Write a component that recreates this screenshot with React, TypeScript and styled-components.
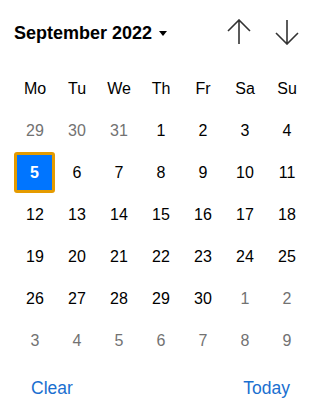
import styled, { createGlobalStyle } from 'styled-components';

const GlobalStyle = createGlobalStyle`
  html, body {
    margin: 0;
    padding: 0;
    background: #ffffff;
  }
  body {
    font-family: 'Liberation Sans', Arial, sans-serif;
  }
`;

type Day = { n: number; muted?: boolean; selected?: boolean };

const weekdays = ['Mo', 'Tu', 'We', 'Th', 'Fr', 'Sa', 'Su'];

const buildDays = (): Day[] => {
  const days: Day[] = [29, 30, 31].map(n => ({ n, muted: true }));
  for (let n = 1; n <= 30; n++) days.push({ n, selected: n === 5 });
  for (let n = 1; n <= 9; n++) days.push({ n, muted: true });
  return days;
};

const App = () => {
  const days = buildDays();

  return (
    <>
      <GlobalStyle />
      <Picker>
        <Header>
          <MonthButton>
            September 2022
            <Caret />
          </MonthButton>
          <Arrows>
            <ArrowButton aria-label='Previous month'>
              <svg width='24' height='26' viewBox='0 0 24 26'>
                <path d='M1 12 L12 1 L23 12 M12 1 V25' fill='none' stroke='#333' strokeWidth='1.6' />
              </svg>
            </ArrowButton>
            <ArrowButton aria-label='Next month'>
              <svg width='24' height='26' viewBox='0 0 24 26'>
                <path d='M1 14 L12 25 L23 14 M12 25 V1' fill='none' stroke='#333' strokeWidth='1.6' />
              </svg>
            </ArrowButton>
          </Arrows>
        </Header>
        <Grid>
          {weekdays.map(w => (
            <Cell key={w}>{w}</Cell>
          ))}
          {days.map((d, i) => (
            <Cell key={i} $muted={d.muted}>
              {d.selected ? <Selected>{d.n}</Selected> : d.n}
            </Cell>
          ))}
        </Grid>
        <Footer>
          <LinkButton>Clear</LinkButton>
          <LinkButton>Today</LinkButton>
        </Footer>
      </Picker>
    </>
  );
};
export default App;

const Picker = styled.div`
  width: 319px;
  height: 415px;
  box-sizing: border-box;
  padding: 0 12px 0 14px;
  background: #fff;
`;

const Header = styled.div`
  display: flex;
  align-items: center;
  justify-content: space-between;
  height: 68px;
  padding-bottom: 2px;
  box-sizing: border-box;
`;

const MonthButton = styled.div`
  display: flex;
  align-items: center;
  font-size: 18px;
  font-weight: 700;
  color: #000;
`;

const Caret = styled.span`
  width: 0;
  height: 0;
  margin-left: 7px;
  margin-top: 1px;
  border-left: 4px solid transparent;
  border-right: 4px solid transparent;
  border-top: 5px solid #000;
`;

const Arrows = styled.div`
  display: flex;
  gap: 12px;
  margin-right: 2px;
  margin-top: -2px;
`;

const ArrowButton = styled.div`
  width: 36px;
  height: 30px;
  display: flex;
  align-items: center;
  justify-content: center;
`;

const Grid = styled.div`
  display: grid;
  grid-template-columns: repeat(7, 42px);
  grid-auto-rows: 42px;
`;

const Cell = styled.div<{ $muted?: boolean }>`
  display: flex;
  align-items: center;
  justify-content: center;
  font-size: 16px;
  color: ${p => (p.$muted ? '#727272' : '#000')};
`;

const Selected = styled.div`
  width: 41px;
  height: 41px;
  margin: -1px 1px 0 0;
  box-sizing: border-box;
  border: 3px solid #e59b00;
  border-radius: 3px;
  background: #0075ff;
  color: #fff;
  font-weight: 700;
  display: flex;
  align-items: center;
  justify-content: center;
`;

const Footer = styled.div`
  display: flex;
  justify-content: space-between;
  align-items: center;
  height: 50px;
  padding: 1px 17px 0 17px;
`;

const LinkButton = styled.span`
  font-size: 17.5px;
  color: #1a6fd0;
`;
